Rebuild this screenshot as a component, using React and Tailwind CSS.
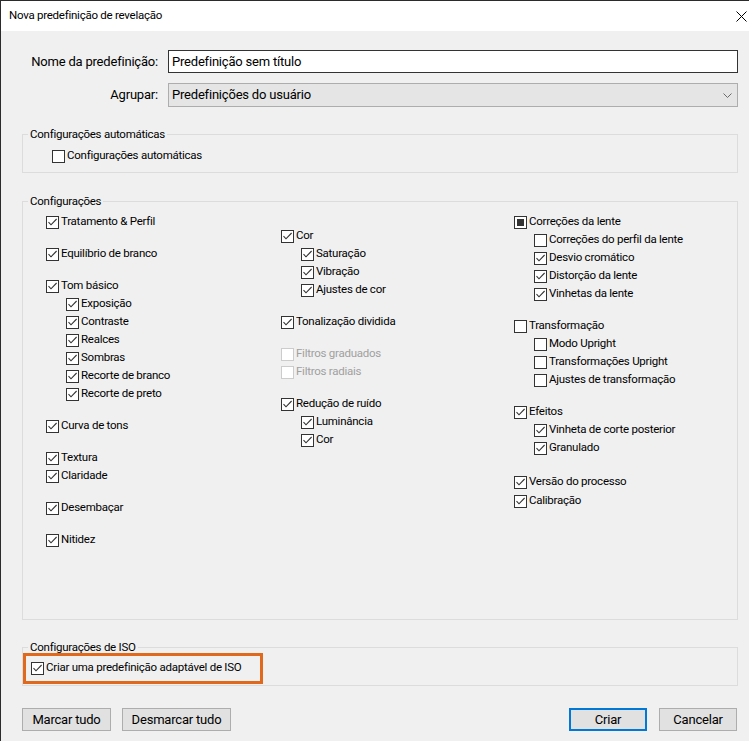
import React from "react";

function Check({ state = "checked", disabled = false }) {
  return (
    <span
      className={
        disabled
          ? "w-[13px] h-[13px] shrink-0 border border-[#cccccc] bg-white flex items-center justify-center"
          : "w-[13px] h-[13px] shrink-0 border border-[#333333] bg-white flex items-center justify-center"
      }
    >
      {state === "checked" && (
        <svg width="11" height="11" viewBox="0 0 11 11">
          <path d="M1.5 5.2 L4 7.8 L9.6 2" fill="none" stroke="#333333" strokeWidth="1.1" />
        </svg>
      )}
      {state === "mixed" && <span className="w-[7px] h-[7px] bg-[#333333]" />}
    </span>
  );
}

function Row({ label, state = "checked", disabled = false, sub = false, className = "" }) {
  return (
    <div className={(sub ? "pl-[20px] " : "") + "flex items-center h-[18px] " + className}>
      <Check state={state} disabled={disabled} />
      <span className={disabled ? "ml-[2px] text-[#a0a0a0] whitespace-nowrap" : "ml-[2px] whitespace-nowrap"}>
        {label}
      </span>
    </div>
  );
}

function Legend({ children }) {
  return <legend className="ml-[5px] px-[2px] leading-[16px]">{children}</legend>;
}

export default function App() {
  return (
    <div className="w-[749px] h-[741px] overflow-hidden bg-[#f0f0f0] border-l border-t border-[#2b2b2b] flex flex-col text-[11.5px] tracking-[-0.25px] text-black font-['Roboto',sans-serif]">
      {/* Title bar */}
      <div className="h-[30px] shrink-0 bg-white flex items-center justify-between pl-[8px] pr-[2px]">
        <span>Nova predefinição de revelação</span>
        <svg width="11" height="11" viewBox="0 0 11 11">
          <path d="M0.5 0.5 L10.5 10.5 M10.5 0.5 L0.5 10.5" stroke="#000" strokeWidth="1" fill="none" />
        </svg>
      </div>

      <div className="flex flex-col pl-[21px] pr-[11px]">
        {/* Name */}
        <div className="flex items-center mt-[19px] text-[13px] tracking-[-0.2px]">
          <div className="w-[136px] text-right">Nome da predefinição:</div>
          <div className="ml-[10px] flex-1 h-[23px] border border-[#333333] bg-white flex items-center pl-[3px]">
            Predefinição sem título
          </div>
        </div>
        {/* Group */}
        <div className="flex items-center mt-[10px] text-[13px] tracking-[-0.2px]">
          <div className="w-[136px] text-right">Agrupar:</div>
          <div className="ml-[10px] flex-1 h-[24px] border border-[#adadad] bg-[#e5e5e5] flex items-center justify-between pl-[3px] pr-[5px]">
            <span>Predefinições do usuário</span>
            <svg width="9" height="5" viewBox="0 0 9 5">
              <path d="M0.5 0.5 L4.5 4.5 L8.5 0.5" stroke="#6a6a6a" strokeWidth="1" fill="none" />
            </svg>
          </div>
        </div>

        {/* Auto settings */}
        <fieldset className="mt-[19px] border border-[#dcdcdc]">
          <Legend>Configurações automáticas</Legend>
          <div className="pl-[29px] pt-[5px] pb-[7px]">
            <Row label="Configurações automáticas" state="unchecked" />
          </div>
        </fieldset>

        {/* Settings */}
        <fieldset className="mt-[20px] border border-[#dcdcdc]">
          <Legend>Configurações</Legend>
          <div className="grid grid-cols-[235px_233px_1fr] pl-[23px] pt-[4px] pb-[70px]">
            <div className="flex flex-col">
              <Row label="Tratamento & Perfil" />
              <Row label="Equilíbrio de branco" className="mt-[14px]" />
              <Row label="Tom básico" className="mt-[14px]" />
              <Row label="Exposição" sub />
              <Row label="Contraste" sub />
              <Row label="Realces" sub />
              <Row label="Sombras" sub />
              <Row label="Recorte de branco" sub />
              <Row label="Recorte de preto" sub />
              <Row label="Curva de tons" className="mt-[14px]" />
              <Row label="Textura" className="mt-[14px]" />
              <Row label="Claridade" />
              <Row label="Desembaçar" className="mt-[14px]" />
              <Row label="Nitidez" className="mt-[14px]" />
            </div>
            <div className="flex flex-col">
              <Row label="Cor" className="mt-[14px]" />
              <Row label="Saturação" sub />
              <Row label="Vibração" sub />
              <Row label="Ajustes de cor" sub />
              <Row label="Tonalização dividida" className="mt-[14px]" />
              <Row label="Filtros graduados" state="unchecked" disabled className="mt-[14px]" />
              <Row label="Filtros radiais" state="unchecked" disabled />
              <Row label="Redução de ruído" className="mt-[14px]" />
              <Row label="Luminância" sub />
              <Row label="Cor" sub />
            </div>
            <div className="flex flex-col">
              <Row label="Correções da lente" state="mixed" />
              <Row label="Correções do perfil da lente" state="unchecked" sub />
              <Row label="Desvio cromático" sub />
              <Row label="Distorção da lente" sub />
              <Row label="Vinhetas da lente" sub />
              <Row label="Transformação" state="unchecked" className="mt-[14px]" />
              <Row label="Modo Upright" state="unchecked" sub />
              <Row label="Transformações Upright" state="unchecked" sub />
              <Row label="Ajustes de transformação" state="unchecked" sub />
              <Row label="Efeitos" className="mt-[14px]" />
              <Row label="Vinheta de corte posterior" sub />
              <Row label="Granulado" sub />
              <Row label="Versão do processo" className="mt-[16px]" />
              <Row label="Calibração" className="mt-[1px]" />
            </div>
          </div>
        </fieldset>

        {/* ISO */}
        <fieldset className="mt-[19px] border border-[#dcdcdc]">
          <Legend>Configurações de ISO</Legend>
          <div className="pl-[8px] pt-[4px] pb-[8px]">
            <div className="relative">
              <Row label="Criar uma predefinição adaptável de ISO" />
              <div className="absolute -left-[8px] -top-[6px] w-[240px] h-[31px] border-[3px] border-[#e0691c] pointer-events-none" />
            </div>
          </div>
        </fieldset>

        {/* Buttons */}
        <div className="flex items-center mt-[22px] pr-[1px] text-[13px] tracking-[-0.2px]">
          <button className="w-[89px] h-[23px] border border-[#adadad] bg-[#e1e1e1]">Marcar tudo</button>
          <button className="ml-[11px] w-[109px] h-[23px] border border-[#adadad] bg-[#e1e1e1]">Desmarcar tudo</button>
          <div className="flex-1" />
          <button className="w-[78px] h-[23px] border-2 border-[#0078d7] bg-[#e1e1e1]">Criar</button>
          <button className="ml-[12px] w-[78px] h-[23px] border border-[#adadad] bg-[#e1e1e1]">Cancelar</button>
        </div>
      </div>
    </div>
  );
}
